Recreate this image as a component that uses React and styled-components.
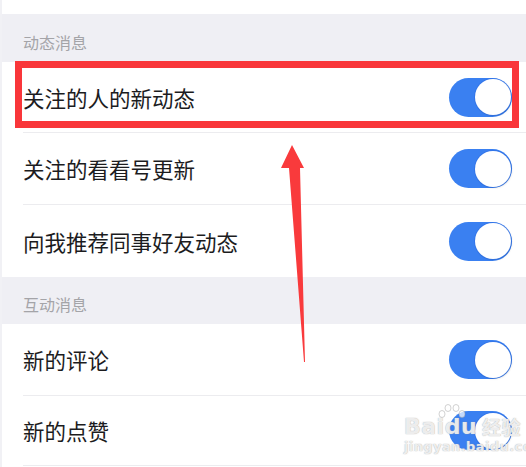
import React from "react";
import styled, { createGlobalStyle } from "styled-components";

const Global = createGlobalStyle`
  html, body { margin: 0; padding: 0; background: #ffffff; }
  body { font-family: "Noto Sans CJK SC", "Noto Sans", sans-serif; }
  * { box-sizing: border-box; }
`;

const Screen = styled.div`
  position: relative;
  width: 526px;
  height: 467px;
  overflow: hidden;
  background: #ffffff;
  border-left: 2px solid #f1f1f5;
`;

const TopGap = styled.div`
  height: 14px;
  background: #ffffff;
`;

const SectionHeader = styled.div`
  height: ${(p) => p.$h}px;
  margin-left: -2px;
  background: #efeff4;
  display: flex;
  align-items: flex-end;
  padding: 0 0 8px 23px;
  font-size: 16px;
  line-height: 24px;
  color: #a4a4a8;
`;

const Row = styled.div`
  height: ${(p) => p.$h}px;
  margin-left: 21px;
  padding-right: 14px;
  display: flex;
  align-items: center;
  justify-content: space-between;
  border-bottom: ${(p) => (p.$last ? "none" : "1px solid #ececef")};
`;

const Label = styled.span`
  font-size: 21.5px;
  color: #1c1c1e;
`;

const Toggle = styled.div`
  width: 63px;
  height: 39px;
  border-radius: 20px;
  background: #3a80f1;
  position: relative;
  flex-shrink: 0;
  &::after {
    content: "";
    position: absolute;
    right: 1px;
    top: 1.5px;
    width: 36px;
    height: 36px;
    border-radius: 50%;
    background: #ffffff;
    box-shadow: 0 0 0 1px rgba(40, 100, 220, 0.35), 1px 1px 2px rgba(0,0,0,0.12);
  }
`;

const Highlight = styled.div`
  position: absolute;
  left: 13px;
  top: 61px;
  width: 504px;
  height: 67px;
  border: 7px solid #f9363a;
  pointer-events: none;
`;

const ArrowSvg = styled.svg`
  position: absolute;
  left: 0;
  top: 0;
  pointer-events: none;
`;

const Watermark = styled.div`
  position: absolute;
  left: 402px;
  top: 414px;
  width: max-content;
  white-space: nowrap;
  color: rgba(255, 255, 255, 0.8);
  font-family: "DejaVu Sans", "Noto Sans CJK SC", sans-serif;
  text-shadow: 0 0 1px rgba(160,160,160,0.75), 0 0 1px rgba(160,160,160,0.5);
  pointer-events: none;
  display: flex;
  flex-direction: column;
  align-items: flex-start;
`;

const WmMain = styled.div`
  font-size: 22px;
  font-weight: bold;
  line-height: 26px;
  display: flex;
  align-items: center;
  gap: 5px;
  letter-spacing: 0.5px;
`;

const WmCn = styled.span`
  font-family: "Noto Sans CJK SC", sans-serif;
  font-size: 19px;
  font-weight: bold;
`;

const WmUrl = styled.div`
  font-size: 13px;
  font-weight: bold;
  line-height: 14px;
  letter-spacing: 0.4px;
`;

const Paw = styled.svg`
  position: absolute;
  left: 434px;
  top: 402px;
  pointer-events: none;
`;

function Item({ label, h, last }) {
  return (
    <Row $h={h} $last={last}>
      <Label>{label}</Label>
      <Toggle />
    </Row>
  );
}

export default function App() {
  return (
    <>
      <Global />
      <Screen>
        <TopGap />
        <SectionHeader $h={48}>动态消息</SectionHeader>
        <Item label="关注的人的新动态" h={71} />
        <Item label="关注的看看号更新" h={72} />
        <Item label="向我推荐同事好友动态" h={72} last />
        <SectionHeader $h={47}>互动消息</SectionHeader>
        <Item label="新的评论" h={72} />
        <Item label="新的点赞" h={70} />
        <Highlight />
        <ArrowSvg width="526" height="467" viewBox="0 0 526 467">
          <polygon points="290,145 279,168 287,168 302,362 303,362 298,168 302,168" fill="#f93a3c" />
        </ArrowSvg>
        <Paw width="30" height="20" viewBox="0 0 30 20">
          <g fill="rgba(255,255,255,0.7)" stroke="rgba(160,160,160,0.6)" strokeWidth="0.8">
            <ellipse cx="6" cy="12" rx="3" ry="3.5" />
            <ellipse cx="12" cy="6" rx="3" ry="3.5" />
            <ellipse cx="20" cy="6" rx="3" ry="3.5" />
            <ellipse cx="26" cy="12" rx="3" ry="3.5" />
          </g>
        </Paw>
        <Watermark>
          <WmMain>
            <span>Baidu</span>
            <WmCn>经验</WmCn>
          </WmMain>
          <WmUrl>jingyan.baidu.com</WmUrl>
        </Watermark>
      </Screen>
    </>
  );
}
